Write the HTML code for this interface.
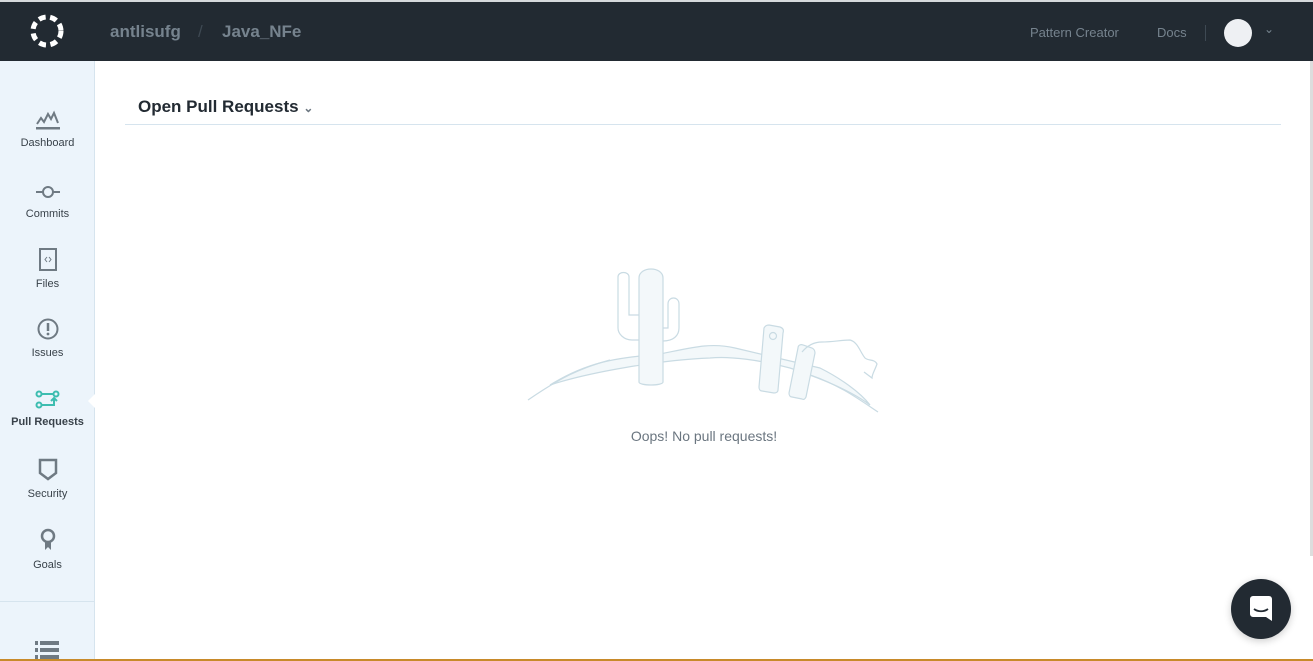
<!DOCTYPE html>
<html><head><meta charset="utf-8"><style>
*{margin:0;padding:0;box-sizing:border-box}
body{width:1313px;height:661px;overflow:hidden;background:#fff;font-family:"Liberation Sans",sans-serif;position:relative}
.top{position:absolute;left:0;top:0;width:1313px;height:61px;background:#222a32;border-top:2px solid #d6d9dc}
.crumb{position:absolute;top:20px;font-size:17px;font-weight:bold;color:#76838e}
.nav{position:absolute;top:23px;font-size:13px;color:#76838e}
.side{position:absolute;left:0;top:61px;width:95px;height:600px;background:#ecf4fb;border-right:1px solid #d6e4ee}
.item{position:absolute;left:0;width:95px;text-align:center;font-size:11px;color:#39424a}
.item svg{display:block;margin:0 auto 6px}
.title{position:absolute;left:138px;top:97px;font-size:17px;font-weight:bold;color:#222a32}
.rule{position:absolute;left:125px;top:124px;width:1156px;height:1px;background:#d6e4ee}
.msg{position:absolute;left:0;width:1313px;text-align:center;top:428px;font-size:14px;color:#6b7680;padding-left:95px}
</style></head><body>
<div class="top">
<svg style="position:absolute;left:29px;top:11px" width="36" height="36" viewBox="0 0 36 36"><circle cx="18" cy="18" r="14" fill="none" stroke="#fff" stroke-width="5" stroke-dasharray="7 4.5"/></svg>
<div class="crumb" style="left:110px">antlisufg</div>
<div class="crumb" style="left:198px;color:#3e4953;font-weight:normal">/</div>
<div class="crumb" style="left:222px">Java_NFe</div>
<div class="nav" style="left:1030px">Pattern Creator</div>
<div class="nav" style="left:1157px">Docs</div>
<div style="position:absolute;left:1205px;top:23px;width:1px;height:16px;background:#3e4953"></div>
<div style="position:absolute;left:1224px;top:17px;width:28px;height:28px;border-radius:50%;background:#eef0f3"></div>
<div class="nav" style="left:1264px;top:20px;font-size:12px">&#8964;</div>
</div>
<div style="position:absolute;right:0;top:61px;width:3px;height:495px;background:#ddd"></div>
<div class="side">
<div class="item" style="top:48px"><svg width="26" height="22" viewBox="0 0 26 22"><path d="M2 15l4-6 3 4 4-8 3 5 3-6 4 10" fill="none" stroke="#6f7a83" stroke-width="2"/><rect x="1" y="18" width="24" height="2.5" fill="#6f7a83"/></svg>Dashboard</div>
<div class="item" style="top:121px"><svg width="26" height="20" viewBox="0 0 26 20"><circle cx="13" cy="10" r="5" fill="none" stroke="#6f7a83" stroke-width="2"/><path d="M1 10h7M18 10h7" stroke="#6f7a83" stroke-width="2"/></svg>Commits</div>
<div class="item" style="top:187px"><svg width="20" height="24" viewBox="0 0 20 24"><rect x="2" y="1" width="16" height="21" fill="none" stroke="#6f7a83" stroke-width="2"/><path d="M9 9l-2 2.5 2 2.5M11 9l2 2.5-2 2.5" fill="none" stroke="#6f7a83"/></svg>Files</div>
<div class="item" style="top:256px"><svg width="24" height="24" viewBox="0 0 24 24"><circle cx="12" cy="12" r="9.5" fill="none" stroke="#6f7a83" stroke-width="2"/><path d="M12 6v8" stroke="#6f7a83" stroke-width="2.5"/><circle cx="12" cy="17" r="1.4" fill="#6f7a83"/></svg>Issues</div>
<div class="item" style="top:329px;font-weight:bold"><svg width="26" height="20" viewBox="0 0 26 20"><circle cx="4" cy="4" r="2.5" fill="none" stroke="#3dbdb0" stroke-width="2"/><circle cx="21" cy="4" r="2.5" fill="none" stroke="#3dbdb0" stroke-width="2"/><circle cx="4" cy="15" r="2.5" fill="none" stroke="#3dbdb0" stroke-width="2"/><path d="M7 4h11M7 15h12v-6M16 11l3-3 3 3" fill="none" stroke="#3dbdb0" stroke-width="2"/></svg>Pull Requests</div>
<div class="item" style="top:397px"><svg width="22" height="24" viewBox="0 0 22 24"><path d="M3 2h16v13l-8 6-8-6z" fill="none" stroke="#6f7a83" stroke-width="2.5"/></svg>Security</div>
<div class="item" style="top:466px"><svg width="22" height="26" viewBox="0 0 22 26"><circle cx="11" cy="9" r="6" fill="none" stroke="#6f7a83" stroke-width="2.5"/><path d="M8 14v9l3-3 3 3v-9" fill="#6f7a83"/></svg>Goals</div>
<div style="position:absolute;left:0;top:540px;width:94px;height:1px;background:#d6e4ee"></div>
<svg style="position:absolute;left:35px;top:580px" width="24" height="20" viewBox="0 0 24 20"><g fill="#6f7a83"><rect x="0" y="0" width="3" height="4"/><rect x="5" y="0" width="19" height="4"/><rect x="0" y="7" width="3" height="4"/><rect x="5" y="7" width="19" height="4"/><rect x="0" y="14" width="3" height="4"/><rect x="5" y="14" width="19" height="4"/></g></svg>
<div style="position:absolute;right:-1px;top:333px;width:0;height:0;border:7px solid transparent;border-right-color:#fff"></div>
</div>
<div class="title">Open Pull Requests <span style="font-size:12px;color:#6b7680">&#8964;</span></div>
<div class="rule"></div>
<svg style="position:absolute;left:520px;top:260px" width="370" height="160" viewBox="0 0 370 160" fill="none" stroke="#c9dbe3" stroke-width="1.2">
<path d="M30 125C70 100 100 98 140 94C170 88 190 82 215 88L300 108C320 118 340 132 350 145C330 130 300 118 270 108C240 100 210 96 190 98C140 100 70 112 30 125z" fill="#f3f8fa"/>
<path d="M8 140C40 118 60 108 90 100"/>
<path d="M290 115C320 125 340 140 358 152"/>
<path d="M98 68V17c0-6 11-6 11 0v38h10" />
<path d="M98 68c0 6 6 12 14 12h7"/>
<path d="M143 68h5V44c0-8 11-8 11 0v24c0 8-6 13-16 13"/>
<path d="M119 122V18c0-12 24-12 24 0v104c0 4-24 4-24 0z" fill="#f3f8fa"/>
<path d="M244 68c1-2 3-3 5-3l11 2c3 1 4 3 3 6l-5 57c0 2-2 3-4 3l-12-2c-2 0-3-2-3-4z" fill="#f3f8fa"/>
<circle cx="253" cy="76" r="3.5"/>
<path d="M278 88c0-3 3-4 5-3l9 3c2 1 3 3 3 5l-9 44c-1 2-2 3-4 2l-10-2c-2 0-3-2-3-4z" fill="#f3f8fa"/>
<path d="M282 92c5-6 12-10 20-10 10 0 20-2 28-2 8 2 10 12 15 18 3 3 10 1 12 6-2 6-5 10-5 14l-8-6"/>
</svg>
<div class="msg">Oops! No pull requests!</div>
<div style="position:absolute;left:1231px;top:579px;width:60px;height:60px;border-radius:50%;background:#222a32;box-shadow:0 2px 8px rgba(0,0,0,.2)"></div>
<svg style="position:absolute;left:1248px;top:595px" width="26" height="28" viewBox="0 0 26 28"><path d="M2 4a3 3 0 0 1 3-3h16a3 3 0 0 1 3 3v22l-6-4H5a3 3 0 0 1-3-3z" fill="#fff"/><path d="M6 14c4 3 10 3 14 0" stroke="#222a32" stroke-width="1.8" fill="none"/></svg>
<div style="position:absolute;left:0;top:659px;width:1313px;height:2px;background:#c88a2a"></div>
</body></html>
